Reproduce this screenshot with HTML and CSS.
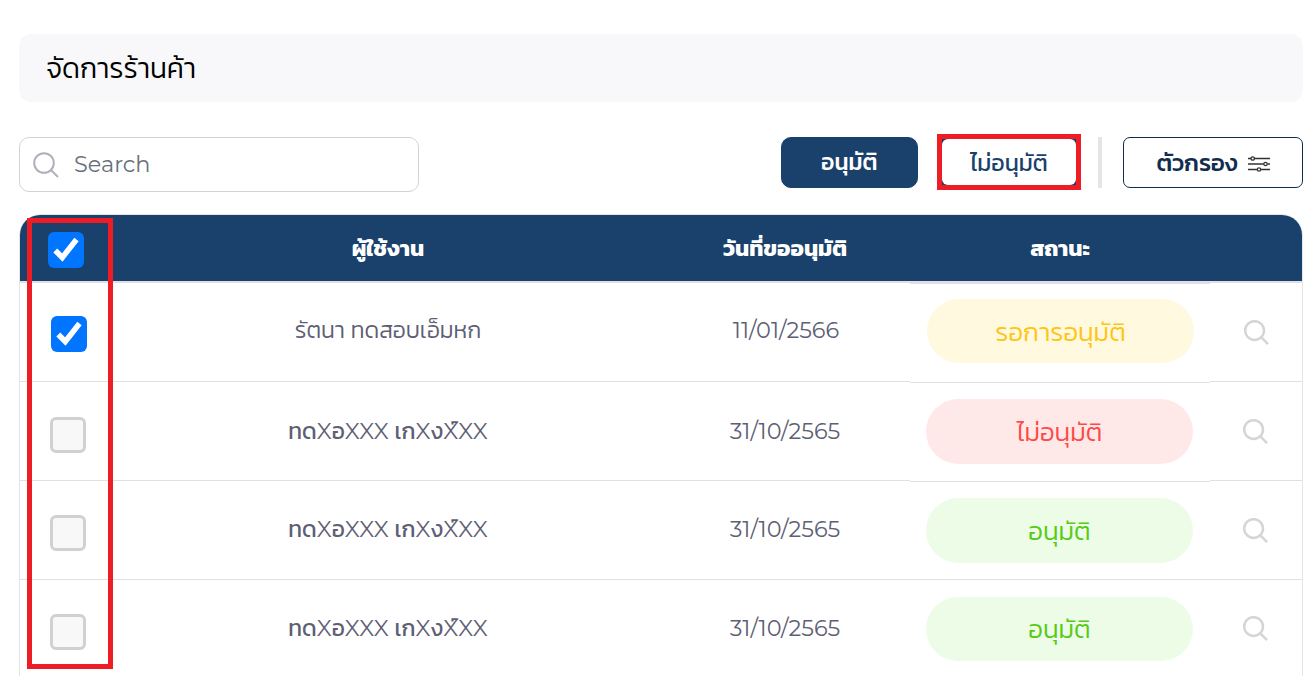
FILE: index.html
```html
<!DOCTYPE html>
<html lang="th">
<head>
<meta charset="utf-8">
<title>จัดการร้านค้า</title>
<link rel="stylesheet" href="styles.css">
</head>
<body>
<svg class="defs" aria-hidden="true">
  <symbol id="lens" viewBox="0 0 26 26"><circle cx="11" cy="11" r="9.8"/><path d="M17.5 17.5L25 25"/></symbol>
  <symbol id="tick" viewBox="0 0 36 36"><path d="M7.300 18.500L14.300 25.500L28.500 7.500"/></symbol>
</svg>
<main class="page">
  <header class="title-bar"><h1 class="title">จัดการร้านค้า</h1></header>
  <section class="toolbar">
    <div class="search"><svg class="search-icon"><use href="#lens"/></svg><span class="search-text">Search</span></div>
    <div class="actions">
      <button class="btn btn-approve">อนุมัติ</button>
      <div class="mark-reject"><button class="btn btn-reject">ไม่อนุมัติ</button></div>
      <span class="divider"></span>
      <button class="btn btn-filter"><span>ตัวกรอง</span>
        <svg class="sliders" viewBox="0 0 22 16"><path d="M0 2.500H3M6.500 2.500H22M0 8H15.500M19.500 8H22M0 13.500H9M13 13.500H22"/><circle cx="4.700" cy="2.500" r="1.700"/><circle cx="17.500" cy="8" r="1.700"/><circle cx="11" cy="13.500" r="1.700"/></svg>
      </button>
    </div>
  </section>
  <section class="table">
    <div class="row head">
      <div class="cell check"><span class="box on"><svg><use href="#tick"/></svg></span></div>
      <div class="cell"><span>ผู้ใช้งาน</span></div>
      <div class="cell"><span>วันที่ขออนุมัติ</span></div>
      <div class="cell status"><span>สถานะ</span></div>
      <div class="cell"></div>
    </div>
    <div class="row first">
      <div class="cell check"><span class="box on"><svg><use href="#tick"/></svg></span></div>
      <div class="cell"><span class="t-name">รัตนา ทดสอบเอ็มหก</span></div>
      <div class="cell"><span class="t-date">11/01/2566</span></div>
      <div class="cell status"><span class="pill wait">รอการอนุมัติ</span></div>
      <div class="cell view"><svg class="view-icon"><use href="#lens"/></svg></div>
    </div>
    <div class="row second">
      <div class="cell check"><span class="box"></span></div>
      <div class="cell"><span class="t-mask">ทดXอXXX เกXงX์XX</span></div>
      <div class="cell"><span class="t-date">31/10/2565</span></div>
      <div class="cell status"><span class="pill no">ไม่อนุมัติ</span></div>
      <div class="cell view"><svg class="view-icon"><use href="#lens"/></svg></div>
    </div>
    <div class="row third">
      <div class="cell check"><span class="box"></span></div>
      <div class="cell"><span class="t-mask">ทดXอXXX เกXงX์XX</span></div>
      <div class="cell"><span class="t-date">31/10/2565</span></div>
      <div class="cell status"><span class="pill ok">อนุมัติ</span></div>
      <div class="cell view"><svg class="view-icon"><use href="#lens"/></svg></div>
    </div>
    <div class="row last">
      <div class="cell check"><span class="box"></span></div>
      <div class="cell"><span class="t-mask">ทดXอXXX เกXงX์XX</span></div>
      <div class="cell"><span class="t-date">31/10/2565</span></div>
      <div class="cell status"><span class="pill ok">อนุมัติ</span></div>
      <div class="cell view"><svg class="view-icon"><use href="#lens"/></svg></div>
    </div>
    <div class="mark-checks"></div>
  </section>
</main>
</body>
</html>
```

FILE: styles.css
```css
* { box-sizing: border-box; }
body { margin: 0; background: #fff; font-family: Montserrat, Kanit, "Noto Sans Thai", "Noto Sans", sans-serif; overflow: hidden; }
.defs { position: absolute; width: 0; height: 0; }
.page { padding: 34px 13px 0 19px; height: 683px; }
span, h1 { white-space: nowrap; }
.title-bar { height: 68px; border-radius: 12px; background: #f8f8fa; padding: 0 0 1px 27px; display: flex; align-items: center; }
.title { margin: 0; font-size: 28.1px; font-weight: 300; color: #000; line-height: 40px; }
.toolbar { margin-top: 35px; height: 55px; display: flex; justify-content: space-between; align-items: flex-start; }
.search { width: 400px; height: 55px; border: 1px solid #ced4da; border-radius: 10px; display: flex; align-items: center; padding-left: 13px; }
.search-icon { width: 26px; height: 26px; fill: none; stroke: #b1b0bb; stroke-width: 2; }
.search-text { margin: 0 0 1px 15px; font: 400 22.4px/30px Montserrat, "Noto Sans", sans-serif; color: #66707a; }
.actions { display: flex; align-items: flex-start; }
.btn { font-family: inherit; font-size: 22.8px; font-weight: 500; height: 51px; border-radius: 10px; padding: 0 0 1px; display: flex; align-items: center; justify-content: center; background: #fff; border: 1px solid #19416c; color: #19416c; }
.btn-approve { width: 137px; background: #19416c; color: #fff; }
.mark-reject { margin: -3px 0 0 19px; width: 144px; height: 56px; border: 5px solid #ee1c25; background: #19416c; }
.btn-reject { width: 134px; height: 46px; border: 0; border-radius: 6px; font-weight: 400; font-size: 23.2px; padding: 0; }
.divider { width: 4px; height: 51px; margin: 0 21px 0 17px; background: #e5e5e5; }
.btn-filter { width: 180px; border-color: #112d4e; color: #112d4e; border-radius: 7px; gap: 10px; font-size: 24px; }
.sliders { width: 22px; height: 16px; fill: none; stroke: #333; stroke-width: 1.3; margin-top: 3px; }
.table { position: relative; margin-top: 22px; height: 462px; border: 1px solid #e3e4e8; border-bottom: 0; border-radius: 22px 22px 0 0; }
.row { display: grid; grid-template-columns: 96px 544px 250px 300px 92px; height: 99px; }
.cell { border-bottom: 1px solid #dee0e5; display: flex; align-items: center; justify-content: center; color: #5e5f75; font-size: 22.4px; padding-bottom: 1px; }
.status { margin-bottom: -1px; padding: 17px 0 0; align-items: flex-start; }
.head { height: 68px; border-radius: 20px 20px 0 0; background: #19416c; }
.head .cell { border-bottom: 2px solid #dee0e5; color: #fff; font-size: 22.4px; font-weight: 700; padding: 0; }
.head .status { align-items: center; margin-bottom: 0; box-shadow: 0 1px #dee0e5; }
.box { width: 36px; height: 36px; border: 3px solid #d1d1d1; border-radius: 6px; background: #f8f8f8; }
.box.on { border: 0; background: #0075ff; }
.box svg { display: block; width: 36px; height: 36px; fill: none; stroke: #fff; stroke-width: 5.500; }
.row .check { align-items: flex-start; padding-top: 34px; }
.head .check { padding: 17px 4px 0 0; }
.first .check { padding: 33px 0 0 2px; }
.second .check { padding-top: 35px; }
.first .status { padding: 16px 0 0 1px; }
.third .status { margin-bottom: 0; }
.pill { width: 267px; height: 65px; border-radius: 33px; display: flex; align-items: center; justify-content: center; font-size: 26px; font-weight: 300; margin-right: 1px; padding-bottom: 1px; }
.first .pill, .last .pill { height: 64px; }
.first .pill { margin-right: 0; padding-bottom: 0; }
.wait { background: #fff9e0; color: #ffc414; }
.no { background: #ffe9e8; color: #ff4947; }
.ok { background: #edfce7; color: #56cb16; }
.view-icon { width: 25px; height: 25px; fill: none; stroke: #d5d5d5; stroke-width: 2.600; margin: 1px 2px 0 0; }
.first .view-icon { margin-right: 0; }
.last { height: 96px; }
.last .cell { border-bottom: 0; padding-bottom: 0; }
.last .status { margin-bottom: 0; }
.t-name { font-weight: 300; font-size: 23px; margin-bottom: 3px; }
.t-mask { font-size: 22.8px; }
.first .t-date { margin: 0 0 3px 2px; }
.third .t-date, .third .t-mask { margin-bottom: 1px; }
.mark-checks { position: absolute; left: 7px; top: 3px; width: 86px; height: 451px; border: 5px solid #ee1c25; }
```
